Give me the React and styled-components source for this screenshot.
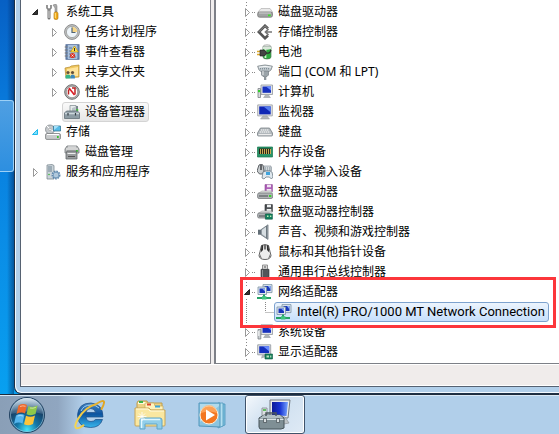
import React from 'react'
import styled, { createGlobalStyle, css } from 'styled-components'

const GlobalStyle = createGlobalStyle`
  * {
    box-sizing: border-box;
  }
  body {
    margin: 0;
    overflow: hidden;
    background: #0a96ec;
    color: #000;
    font-family: 'Noto Sans', 'Noto Sans CJK SC', sans-serif;
    font-size: 12px;
  }
  button {
    font: inherit;
    color: inherit;
  }
  svg {
    display: block;
    flex: none;
  }
`

const Screen = styled.div`
  display: flex;
  flex-direction: column;
  min-height: 100vh;
`

const Desktop = styled.main`
  display: flex;
  flex: 1;
  background: linear-gradient(#0760c4, #0878da 25%, #0a8ce6 60%, #08a0f0);
`

const DesktopEdge = styled.div`
  width: 14px;
  padding-top: 100px;
  background: linear-gradient(to right, transparent 50%, rgba(0, 30, 80, 0.5));
`

const Tile = styled.div`
  height: 72px;
  border: 1px solid #9cd0f6;
  border-left: 0;
  border-radius: 0 3px 3px 0;
  background: linear-gradient(#4f9fe2, #2d8fe0);
`

const Window = styled.section`
  display: flex;
  flex: 1;
  flex-direction: column;
  min-width: 0;
  padding: 0 0 6px 5px;
  border: solid #1c3047;
  border-width: 0 0 1px 1px;
  border-bottom-left-radius: 7px;
  background: #b1cfea;
  box-shadow: inset 1px -1px 0 #f2f8fd;
`

const Frame = styled.div`
  display: flex;
  flex: 1;
  flex-direction: column;
  border: solid #566272;
  border-width: 0 0 1px 1px;
`

const Panes = styled.div`
  display: flex;
  flex: 1;
  background: #f0eded;
`

const NavPane = styled.nav`
  width: 190px;
  padding: 2px 0 0 10px;
  border: solid #85858c;
  border-width: 0 1px 1px 0;
  background: #fff;
`

const DevicePane = styled.section`
  flex: 1;
  min-width: 0;
  margin-left: 3px;
  padding: 2px 0 0 27px;
  border: solid #7d8087;
  border-width: 0 0 1px 2px;
  background: #fff;
`

const StatusBar = styled.footer`
  height: 22px;
  border: solid #fff;
  border-width: 1px 0;
  background: #f0eceb;
`

const List = styled.ul`
  margin: 0;
  padding: 0;
  list-style: none;
`

const Row = styled.div`
  display: flex;
  align-items: center;
  height: 20px;
  padding-left: ${({ $level }) => ($level ? 19 : 0)}px;
`

const Expander = styled.button`
  width: 12px;
  height: 20px;
  padding: 0;
  border: 0;
  background: none;
`

const Blank = styled.span`
  width: 12px;
`

const selected = {
  gray: css`
    border-color: #d4d4d4;
    background: linear-gradient(#fafafa, #e6e6e6);
  `,
  blue: css`
    border-color: #7da2ce;
    background: linear-gradient(#ecf4fd, #c6dffc);
    font-family: Roboto, 'Noto Sans CJK SC', sans-serif;
    font-size: 13px;
  `,
}

const Label = styled.button`
  display: flex;
  align-items: center;
  gap: 5px;
  height: 20px;
  padding: 0 3px 0 1px;
  border: 1px solid transparent;
  border-radius: 3px;
  background: none;
  line-height: 18px;
  white-space: nowrap;
  ${({ $selected }) => selected[$selected]}
`

const Highlighted = styled.li`
  position: relative;
  &::after {
    content: '';
    position: absolute;
    inset: -5px 3px -6px -3px;
    border: 3px solid #fc363b;
    pointer-events: none;
  }
`

const Taskbar = styled.footer`
  display: flex;
  align-items: center;
  height: 40px;
  border-top: 1px solid #1f2c3c;
  background: linear-gradient(to right, #8a9fb7, #90a6c0 58px, #b1cfea 84px);
  box-shadow: inset 0 1px 0 #d9e8f5;
`

const TaskButton = styled.button`
  display: flex;
  align-items: center;
  justify-content: center;
  width: 62px;
  height: 39px;
  padding: 0;
  border: 0;
  background: none;
  ${({ $start }) =>
    $start &&
    css`
      width: 54px;
      margin-right: 3px;
    `}
  ${({ $active }) =>
    $active &&
    css`
      width: 60px;
      margin-left: 2px;
      border: 1px solid #3f536b;
      border-radius: 3px;
      background: linear-gradient(135deg, #f4f8fc, #cfe0f0 45%, #dfeaf5);
      box-shadow: inset 0 0 0 1px #fff;
    `}
`

const ICONS = {
  tools: (
    <>
      <path d="M4 6v8" stroke="#777" strokeWidth="3" strokeLinecap="round" />
      <path d="M4 6v8" stroke="#e4e4e4" />
      <path d="M2 1v3l2 2 2-2V1" fill="none" stroke="#858585" strokeWidth="1.7" />
      <path d="M8 1l3-1 1 2v6h-2V4z" fill="#aaa" stroke="#777" strokeWidth=".5" />
      <rect x="9" y="8" width="4" height="7.5" rx="1.6" fill="#f1aa19" stroke="#a96e06" strokeWidth=".6" />
      <path d="M10.3 9v5" stroke="#ffe28a" />
    </>
  ),
  clock: (
    <>
      <circle cx="8" cy="8" r="7.4" fill="#c4c4c2" stroke="#8b8d8f" />
      <circle cx="8" cy="8" r="5.6" fill="#edf4f9" stroke="#8f9494" strokeWidth=".7" />
      <path d="M8 8V2.7A5.3 5.3 0 0 1 13.3 8z" fill="#f6d587" />
      <path d="M8 3.5v5h3.5" fill="none" stroke="#506575" strokeWidth="1.2" />
    </>
  ),
  events: (
    <>
      <rect x="2" y=".8" width="13" height="14.4" fill="#7d9cc4" stroke="#4a6592" />
      <path d="M4 1h9v14H4z" fill="#a9c0dc" />
      <path d="M5 4h3M5 7h2M5 10h2M5 13h7" stroke="#5f789c" />
      <path d="M.7 3h3M.7 6h3M.7 9h3M.7 12h3" stroke="#777" />
      <path d="M10.5 2l4 6h-8z" fill="#ffe04a" stroke="#ae8404" strokeWidth=".6" />
      <path d="M10.5 4v3" stroke="#333" />
      <circle cx="8.5" cy="11.5" r="2.6" fill="#d9372a" />
      <path d="M7.5 10.5l2 2m0-2l-2 2" stroke="#fff" strokeWidth=".7" />
    </>
  ),
  shared: (
    <>
      <path d="M1 4l5-1 1-1 8-1v12l-13 1z" fill="#efc75f" stroke="#b48a2b" strokeWidth=".7" />
      <path d="M3 5l11-2v9H3z" fill="#ffe49b" />
      <circle cx="4" cy="8.5" r="1.6" fill="#665039" />
      <circle cx="8.5" cy="8.5" r="1.6" fill="#665039" />
      <path d="M1.5 14.5v-2q0-2 2.5-2t2.5 2v2z" fill="#35b58b" />
      <path d="M6.5 14.5v-2q0-2 2.2-2t2.2 2v2z" fill="#3d88bd" />
    </>
  ),
  performance: (
    <>
      <circle cx="8" cy="8" r="7.3" fill="#b4b4b4" stroke="#707070" />
      <circle cx="8" cy="8" r="5.7" fill="#fff" stroke="#777" strokeWidth=".6" />
      <path d="M4.5 10.5v-4l1.4-1.7M8 4h3v6.5" fill="none" stroke="#bd2222" strokeWidth="1.5" />
      <path d="M5 4l5.5 7" stroke="#dc1c26" strokeWidth="1.6" />
    </>
  ),
  manager: (
    <>
      <path d="M6 1.5h6v7H6z" fill="#e8ebec" stroke="#899498" strokeWidth=".8" />
      <path d="M8 8V4l3-1v5" fill="#b8c2c7" />
      <path d="M12 2h2v8h-2z" fill="#7a868d" />
      <path d="M12.4 5h1.8v2h-1.8z" fill="#3dc532" />
      <path d="M.5 9l2-2h11l2 2v5.5H.5z" fill="#8d9ca4" stroke="#626f77" strokeWidth=".8" />
      <path d="M1 9.5h14" stroke="#ccd7dc" strokeWidth="1.5" />
      <path d="M4 9v2.5M11.5 9v2.5" stroke="#343e45" strokeWidth="1.2" />
    </>
  ),
  storage: (
    <>
      <circle cx="5" cy="5.5" r="4.5" fill="#c4c8cb" stroke="#84898d" strokeWidth=".8" />
      <path d="M5 5L2 2M5 5l3 2" stroke="#fff" />
      <circle cx="5" cy="5.5" r="1.2" fill="#f7f7f7" stroke="#888" strokeWidth=".5" />
      <path d="M8.5 2h7v5h-7z" fill="#56bbe7" stroke="#367998" strokeWidth=".8" />
      <path d="M9 6l5-4H9z" fill="#a3e0f9" />
      <rect x=".6" y="9.6" width="14.8" height="5.8" rx="1.2" fill="#c9cbcc" stroke="#737678" strokeWidth=".8" />
      <path d="M2 10.5h12" stroke="#fff" />
      <path d="M12 12h1.7v2H12z" fill="#38c22d" />
    </>
  ),
  disks: (
    <>
      <path d="M1 5l2-3h10l2 3v4H1z" fill="#b9bbbc" stroke="#727678" strokeWidth=".8" />
      <path d="M2 5h12M4 3h8" stroke="#eee" />
      <path d="M12 6h1.8v2H12z" fill="#39ba31" />
      <path d="M2 10l1-3h9l1 3v5H2z" fill="#999c9e" stroke="#63676a" strokeWidth=".8" />
      <path d="M3.5 9.5h8" stroke="#eee" />
      <path d="M4 12.5h7" stroke="#555" />
    </>
  ),
  services: (
    <>
      <path d="M2 1l5-.5 2 1V15H2z" fill="#cbd4da" stroke="#7f8b93" strokeWidth=".8" />
      <path d="M3 3h4M3 5h4M3 7h4" stroke="#718592" />
      <circle cx="4" cy="10.5" r=".8" fill="#39b735" />
      <circle cx="11" cy="11" r="3.6" fill="#d5e5f2" stroke="#6189ae" strokeWidth="1.8" strokeDasharray="1.6 .8" />
      <circle cx="11" cy="11" r="2.8" fill="#bcd4e7" stroke="#658cae" strokeWidth=".8" />
      <circle cx="11" cy="11" r="1" fill="#fff" stroke="#658cae" strokeWidth=".5" />
    </>
  ),
  drive: (
    <>
      <path d="M1 8l3-3.5h9L15.5 8v1H1z" fill="#e9e9e9" stroke="#b2b2b2" strokeWidth=".7" />
      <rect x=".7" y="8" width="14.8" height="5.2" rx="1.8" fill="#a1a3a3" stroke="#777" strokeWidth=".8" />
      <path d="M2 9h12" stroke="#ddd" strokeWidth=".8" />
      <path d="M11 10.5h2.7v1.7H11z" fill="#3de529" />
    </>
  ),
  controller: (
    <>
      <path d="M11 4.5L8 1.8 1.8 8 8 14.2l3-2.7" fill="none" stroke="#555" strokeWidth="2.7" />
      <path d="M11 4.5L8 1.8 1.8 8" fill="none" stroke="#888" />
      <path d="M8 8h7M11.5 5l-3 3 3 3" fill="none" stroke="#777" strokeWidth="1.7" />
    </>
  ),
  battery: (
    <>
      <ellipse cx="10" cy="2.5" rx="4" ry="1.7" fill="#ececec" stroke="#868b86" strokeWidth=".6" />
      <path d="M6 3h8v10q0 2-4 2t-4-2z" fill="#2cab3d" stroke="#52785a" strokeWidth=".7" />
      <path d="M8.5 4v10" stroke="#caf5cd" strokeWidth="1.7" />
      <path d="M6 3h8v2q-4 1.5-8 0z" fill="#d9e6d9" />
      <path d="M0 7.5h3M0 10.5h3" stroke="#dfaa29" strokeWidth="1.3" />
      <path d="M3 6h3q3.5.3 3.5 3T6 12H3z" fill="#444" stroke="#1c1c1c" strokeWidth=".6" />
      <path d="M9 9q4 1 5-3" fill="none" stroke="#303030" strokeWidth="1.2" />
    </>
  ),
  port: (
    <>
      <path d="M.6 2.2q7.4-2.5 14.8 0L14 6l-2 1.5H4L2 6z" fill="#c0c9ce" stroke="#82898d" strokeWidth=".8" />
      <path d="M2 3.2q6-1.6 12 0" fill="none" stroke="#f7f9fa" />
      <path d="M3 4.8h10" stroke="#697780" strokeDasharray="1 1" />
      <path d="M4.5 7h7v4L10 12.5H6L4.5 11z" fill="#9ba4a9" stroke="#747d82" strokeWidth=".7" />
      <path d="M6 7v4" stroke="#eee" />
      <path d="M7 12.5h2.3V16H7z" fill="#8e969b" />
    </>
  ),
  computer: (
    <>
      <path d="M4 1h11.5v9.5H4z" fill="#e3e5e7" stroke="#92979c" strokeWidth=".8" />
      <path d="M5.5 2.5H14v6.3H5.5z" fill="#1731bf" />
      <path d="M9 2.5h5v4z" fill="#688bff" />
      <path d="M8 11h4l2 3H6z" fill="#b2b6ba" />
      <path d="M1 4.5h2.5v9H1z" fill="#d9dcdd" stroke="#7c8286" strokeWidth=".8" />
      <path d="M1 6h2.2v2.2H1z" fill="#31cf2c" />
    </>
  ),
  monitor: (
    <>
      <path d="M.7.9h14.6v11H.7z" fill="#e3e4e5" stroke="#999da1" strokeWidth=".8" />
      <path d="M2.2 2.4h11.5v8H2.2z" fill="#1027b5" />
      <path d="M6.5 2.4h7.2v5.8z" fill="#547dee" />
      <path d="M6 12h4l2.5 3h-9z" fill="#b4b7ba" stroke="#92979a" strokeWidth=".5" />
    </>
  ),
  keyboard: (
    <>
      <path d="M3.5 4h9l3 5v2q0 1-1 1h-13q-1 0-1-1V9z" fill="#b1b7bb" stroke="#7b8388" strokeWidth=".8" />
      <path d="M4 6h8M2.7 8h10.5" stroke="#fff" strokeWidth="1.2" strokeDasharray="1.4 .6" />
      <path d="M1.5 10.6h13" stroke="#ececec" strokeWidth="1.2" />
    </>
  ),
  memory: (
    <>
      <path d="M.5 3h15v10H.5z" fill="#299369" stroke="#15784e" strokeWidth=".7" />
      <path d="M2 4.5h12V10H2z" fill="#2b2717" />
      <path
        d="M3.5 5v5M5.5 5v5M7.5 5v5M9.5 5v5M11.5 5v5M13.5 5v5"
        stroke="#f1cb65"
        strokeWidth=".8"
      />
    </>
  ),
  hid: (
    <>
      <path d="M7 2h7v5H7z" fill="#d4dadd" stroke="#8a949b" strokeWidth=".7" />
      <path d="M8 4h7M8 6h7" stroke="#7d8b94" strokeDasharray="1 1" />
      <path d="M2 1q2-1.5 4 0l1 6-1.5 3h-3L0 7z" fill="#c8ccce" stroke="#51565a" strokeWidth=".9" />
      <path d="M4 1v5" stroke="#424548" strokeWidth="1.5" />
      <path d="M6 8l3-1h4l2 1 1 5-1.6 2-2-2H9l-2 2-2-1z" fill="#dfe8ee" stroke="#6d7c86" strokeWidth=".8" />
      <path d="M9 8h4v3H9z" fill="#3fa3dc" />
    </>
  ),
  floppyDrive: (
    <>
      <path d="M8 .6h7.4v7H8z" fill="#ad5fb7" stroke="#884591" strokeWidth=".6" />
      <path d="M10 .8h4v2.5h-4zM9.7 5h4.6v3H9.7z" fill="#f0e4f2" />
      <path d="M1 9.5L5 7h9l1.5 2.5" fill="#dedede" stroke="#a5a5a5" strokeWidth=".6" />
      <rect x=".6" y="9" width="15" height="5.5" rx="1.5" fill="#b0b3b5" stroke="#777b7e" strokeWidth=".8" />
      <path d="M2 12h9" stroke="#4a4f52" />
      <path d="M12 11h2.3v2H12z" fill="#3ad52b" />
    </>
  ),
  floppyController: (
    <>
      <path d="M8 .6h7.4v7H8z" fill="#4d5154" stroke="#26292b" strokeWidth=".6" />
      <path d="M10 .8h4v2.5h-4zM9.7 5h4.6v3H9.7z" fill="#edf0f1" />
      <path d="M1 9.5L5 7h9l1.5 2.5" fill="#dedede" stroke="#a5a5a5" strokeWidth=".6" />
      <rect x=".6" y="9" width="13" height="5" rx="1.5" fill="#b0b3b5" stroke="#777b7e" strokeWidth=".8" />
      <path d="M2 12h6" stroke="#4a4f52" />
      <path d="M8.4 10h7v5.2h-7z" fill="#158260" stroke="#08543d" strokeWidth=".6" />
      <path d="M10 11.5h1.5V13H10zm3 0h1.3V13H13z" fill="#bdebb1" />
    </>
  ),
  speaker: (
    <>
      <path d="M1 5.7h3.5v5H1z" fill="#626e76" />
      <path d="M4 5.7L11 .8v14.6l-7-4.7z" fill="#a7b0b6" stroke="#69747b" strokeWidth=".8" />
      <path d="M5 6l4-3v10l-4-3z" fill="#d7dee2" />
      <path d="M9.6 2v12" stroke="#67727a" />
    </>
  ),
  mouse: (
    <>
      <path d="M4.5 1.5q3.5-2 7 0l1.5 6 1 4q-.5 4-6 4t-6-4l1-4z" fill="#ececec" stroke="#555" strokeWidth=".9" />
      <path d="M4.5 1.5l-.8 7L6 6l.2-5zM11.5 1.5l.8 7L10 6l-.2-5z" fill="#303030" />
      <path d="M8 1v4.5" stroke="#555" strokeWidth="1.6" />
      <path d="M3 10l-.5 2q1 2.5 2.5 2.8zM13 10l.5 2q-1 2.5-2.5 2.8z" fill="#777" />
    </>
  ),
  usb: (
    <>
      <path d="M5.5 1h5v4.5h-5z" fill="#dadada" stroke="#888" strokeWidth=".9" />
      <path d="M7 3h2" stroke="#555" />
      <path d="M4 5.3h8v7q0 2.7-4 2.7t-4-2.7z" fill="#52565a" stroke="#303335" strokeWidth=".6" />
      <path d="M5.5 6v7" stroke="#8e9296" />
    </>
  ),
  network: (
    <>
      <path d="M6 .6h9v8H6z" fill="#dce6ee" stroke="#7890a3" strokeWidth=".8" />
      <path d="M7.5 2h6v5h-6z" fill="#1b39bc" />
      <path d="M11 2h2.5v3.5z" fill="#8db4fa" />
      <path d="M1 3h8.5v7.5H1z" fill="#e1e9ef" stroke="#7890a3" strokeWidth=".8" />
      <path d="M2.5 4.5H8V9H2.500z" fill="#1835b8" />
      <path d="M5 4.5h3v3z" fill="#83a7f2" />
      <path d="M7 10.5V13M0 14h14" stroke="#26a366" strokeWidth="2" />
      <path d="M5 12.2h4.4v3.3H5z" fill="#3fc47e" />
    </>
  ),
  system: (
    <>
      <path d="M4 .8h11.5v9.7H4z" fill="#e3e5e7" stroke="#92979c" strokeWidth=".8" />
      <path d="M5.5 2.3H14v6.5H5.5z" fill="#1731bf" />
      <path d="M9 2.3h5v4z" fill="#688bff" />
      <path d="M8 11h4l2 3H6z" fill="#aeb3b8" />
      <path d="M1 5.5h2.8V15H1z" fill="#c9ced1" stroke="#7c8286" strokeWidth=".8" />
      <path d="M1.8 7v5" stroke="#fff" />
    </>
  ),
  display: (
    <>
      <path d="M.7.8h13v10H.7z" fill="#e1e3e6" stroke="#8d949b" strokeWidth=".8" />
      <path d="M2.2 2.3h10v6.8h-10z" fill="#1530bd" />
      <path d="M6 2.3h6.2v5z" fill="#688bff" />
      <path d="M5 11h4v2l-5 1.5z" fill="#adb2b6" />
      <path d="M8 10h7.5v5H8z" fill="#16805c" stroke="#0d5942" strokeWidth=".6" />
      <path d="M9.5 11.5H12v2H9.5zm3.6 0h1.2v2h-1.2z" fill="#b9e0bc" />
    </>
  ),
}

const Icon = ({ name }) => (
  <svg width="16" height="16" viewBox="0 0 16 16" aria-hidden="true">
    {ICONS[name]}
  </svg>
)

const Arrow = ({ open, hot, dots }) => (
  <svg width="12" height="20" viewBox="0 0 12 20" aria-hidden="true">
    {dots && (
      <path d="M3 0h1v1H3zM3 3h1v1H3zM3 17h1v1H3zM9 10h1v1H9zM11 10h1v1h-1z" fill="#888" />
    )}
    {open ? (
      <path
        d="M6.5 7.5v5h-5z"
        fill={hot ? '#83dffb' : '#333'}
        stroke={hot ? '#1cb9ed' : '#222'}
        strokeLinejoin="round"
      />
    ) : (
      <path d="M2.5 6.5v8l4-4z" fill="#fff" stroke="#999" />
    )}
  </svg>
)

const Item = ({ name, icon, level, open, hot, leaf, dots, mark }) => (
  <Row $level={level}>
    {leaf ? (
      <Blank />
    ) : (
      <Expander aria-label={name} aria-expanded={!!open}>
        <Arrow open={open} hot={hot} dots={dots} />
      </Expander>
    )}
    <Label $selected={mark}>
      <Icon name={icon} />
      {name}
    </Label>
  </Row>
)

const AdapterRow = styled.div`
  display: flex;
`

const Branch = styled.svg`
  margin-right: -31px;
`

const NAV = [
  { name: '系统工具', icon: 'tools', open: true },
  { name: '任务计划程序', icon: 'clock', level: 1 },
  { name: '事件查看器', icon: 'events', level: 1 },
  { name: '共享文件夹', icon: 'shared', level: 1 },
  { name: '性能', icon: 'performance', level: 1 },
  { name: '设备管理器', icon: 'manager', level: 1, leaf: true, mark: 'gray' },
  { name: '存储', icon: 'storage', open: true, hot: true },
  { name: '磁盘管理', icon: 'disks', level: 1, leaf: true },
  { name: '服务和应用程序', icon: 'services' },
]

const DEVICES = [
  ['磁盘驱动器', 'drive'],
  ['存储控制器', 'controller'],
  ['电池', 'battery'],
  ['端口 (COM 和 LPT)', 'port'],
  ['计算机', 'computer'],
  ['监视器', 'monitor'],
  ['键盘', 'keyboard'],
  ['内存设备', 'memory'],
  ['人体学输入设备', 'hid'],
  ['软盘驱动器', 'floppyDrive'],
  ['软盘驱动器控制器', 'floppyController'],
  ['声音、视频和游戏控制器', 'speaker'],
  ['鼠标和其他指针设备', 'mouse'],
  ['通用串行总线控制器', 'usb'],
]

const MORE_DEVICES = [
  ['系统设备', 'system'],
  ['显示适配器', 'display'],
]

const DeviceItems = ({ items }) =>
  items.map(([name, icon]) => (
    <li key={name}>
      <Item name={name} icon={icon} dots />
    </li>
  ))

const StartOrb = () => (
  <svg width="38" height="38" viewBox="0 0 38 38" aria-hidden="true">
    <defs>
      <radialGradient id="orb" cx=".5" cy=".92" r=".85">
        <stop offset="0" stopColor="#42e4f8" />
        <stop offset=".35" stopColor="#1478a9" />
        <stop offset=".75" stopColor="#173f65" />
        <stop offset="1" stopColor="#6d8daa" />
      </radialGradient>
      <linearGradient id="gloss" x2="0" y2="1">
        <stop stopColor="#e6f0f7" stopOpacity=".85" />
        <stop offset="1" stopColor="#8dafca" stopOpacity=".25" />
      </linearGradient>
    </defs>
    <circle cx="19" cy="19" r="17.5" fill="url(#orb)" stroke="#244463" />
    <circle cx="19" cy="19" r="16.5" fill="none" stroke="#a4cadf" strokeOpacity=".6" />
    <path d="M3 18a16 16 0 0 1 32 0q-16-5-32 0z" fill="url(#gloss)" />
    <path d="M10.5 9.5q4.5-2.5 8.5-.5l-2 8.5q-4-2-8.5.5z" fill="#ee692b" />
    <path d="M20.5 10q4 2 9-.5l-2 8.5q-4.5 2.2-9 .2z" fill="#8fc94a" />
    <path d="M8 19.5q4.5-2.5 8.5-.5l-2 8.5q-4-2-8.5.5z" fill="#55b5ee" />
    <path d="M18 19.8q4.5 2 9-.3L25 28q-4.500 2.400-9 .3z" fill="#fbc43a" />
    <path d="M12 10.5q3-1.200 5.500-.2M22 12q3 .7 5.800-.6M9.500 20q3-1 5.500 0" fill="none" stroke="#fff" strokeOpacity=".5" />
  </svg>
)

const Explorer = () => (
  <svg width="34" height="34" viewBox="0 0 34 34" aria-hidden="true">
    <defs>
      <linearGradient id="ie" x2="0" y2="1">
        <stop stopColor="#4788c5" />
        <stop offset=".45" stopColor="#0c539f" />
        <stop offset="1" stopColor="#37b7ed" />
      </linearGradient>
      <linearGradient id="ring" x2="1" y2="0">
        <stop stopColor="#f4d553" />
        <stop offset="1" stopColor="#dfa423" />
      </linearGradient>
    </defs>
    <path
      d="M32 19H15q.5 4.5 5 4.5 3 0 4.5-2h7q-2.500 8-12 8Q7 29.500 6.500 17.500 7 5 20 5q12 1 12 14zM15 14.500h9.500q-.7-4-4.700-4t-4.800 4z"
      fill="url(#ie)"
      stroke="#1a4b84"
      strokeWidth=".7"
    />
    <path d="M10 13q2.500-6 10-6 5 0 8 3" fill="none" stroke="#a6d1ef" />
    <path
      d="M26 5.500Q32.500 1.500 33 4q.3 2-2.500 7M25.500 6Q14 9 7 21q-4.500 8-1.500 9.300 2.500.3 7-3"
      fill="none"
      stroke="url(#ring)"
      strokeWidth="2"
      strokeLinecap="round"
    />
  </svg>
)

const Folder = () => (
  <svg width="34" height="34" viewBox="0 0 34 34" aria-hidden="true">
    <path d="M4 5l1-2h9l1 2h14v22H4z" fill="#ecd184" stroke="#bf9e4d" />
    <path d="M5 4h8v2H5z" fill="#fff9dc" />
    <path d="M6 3h4v2H6z" fill="#39b34a" />
    <path d="M12 8V5h9l1 3h8v4H12z" fill="#fff3bc" stroke="#c9aa58" strokeWidth=".7" />
    <path d="M14 5.5h4v2h-4z" fill="#d9452f" />
    <path d="M22 7.5h5v2h-5z" fill="#3aa5d8" />
    <path d="M2 10h14l2 2h14v15q0 1-1 1H3q-1 0-1-1z" fill="#fae7a0" stroke="#c8a557" />
    <path d="M3 11h12l2 2h14" fill="none" stroke="#fffbe0" />
    <path d="M7 31v-9q0-2 2-2h18q2 0 2 2v9h-5v-5H12v5z" fill="#91cee9" stroke="#5fa5c8" />
    <path d="M8.5 30v-8.500H27" fill="none" stroke="#dff7ff" strokeWidth="1.5" />
    <path d="M9 14v9M4.500 18.500h9M6 15.500l6 6M12 15.500l-6 6" stroke="#fff" strokeWidth=".8" />
  </svg>
)

const Player = () => (
  <svg width="34" height="34" viewBox="0 0 34 34" aria-hidden="true">
    <path d="M25 6h5v21l-5 2z" fill="#7fc1de" stroke="#4f98bd" strokeWidth=".8" />
    <path d="M23 5h5v23l-5 2z" fill="#b2dff0" stroke="#4f98bd" strokeWidth=".8" />
    <path d="M4 5h21v24L4 28z" fill="#8bc5e0" stroke="#5196bb" />
    <path d="M5 6h19v2L5 24z" fill="#c0e2f1" fillOpacity=".7" />
    <circle cx="14" cy="17" r="9" fill="#f37721" stroke="#fff0da" />
    <path d="M6 15a8 8 0 0 1 16 0q-8-3-16 0z" fill="#ffb26c" fillOpacity=".7" />
    <path d="M11 11.500v11l9-5.500z" fill="#fff" />
  </svg>
)

const Toolbox = () => (
  <svg width="36" height="36" viewBox="0 0 36 36" aria-hidden="true">
    <defs>
      <linearGradient id="screen" x2="1" y2="0">
        <stop stopColor="#0b1997" />
        <stop offset=".5" stopColor="#1732d2" />
        <stop offset="1" stopColor="#77a5ff" />
      </linearGradient>
    </defs>
    <path d="M13 3h20l-2 18-18-1z" fill="#e7eaec" stroke="#757b80" />
    <path d="M15 5h16l-1.500 14L15 18z" fill="url(#screen)" />
    <path d="M21 20h7l4 6-10 2z" fill="#bfc4c7" stroke="#8c9499" strokeWidth=".7" />
    <path d="M5 11h5v9H5z" fill="#dde0e2" stroke="#7f878b" strokeWidth=".8" />
    <path d="M6 13h3" stroke="#38b437" strokeWidth="1.5" />
    <path d="M2 21l5-3h16l4 3v10l-3 1H3l-1-2z" fill="#7f8f95" stroke="#465359" />
    <path d="M2.500 21.500L7 18h16l3.500 3.500z" fill="#b2bfc4" />
    <path d="M2.500 22.500h24" stroke="#dbe3e6" />
    <path d="M9 19v-3h10v3" fill="none" stroke="#4c575c" strokeWidth="1.5" />
    <path d="M6.500 21.500h3v4h-3zM19.500 21.500h3v4h-3z" fill="#d6dcde" stroke="#424b50" strokeWidth=".7" />
  </svg>
)

const App = () => (
  <>
    <GlobalStyle />
    <Screen>
      <Desktop>
        <DesktopEdge>
          <Tile />
        </DesktopEdge>
        <Window>
          <Frame>
            <Panes>
              <NavPane>
                <List>
                  {NAV.map(item => (
                    <li key={item.name}>
                      <Item {...item} />
                    </li>
                  ))}
                </List>
              </NavPane>
              <DevicePane>
                <List>
                  <DeviceItems items={DEVICES} />
                  <Highlighted>
                    <Item name="网络适配器" icon="network" open dots />
                    <AdapterRow>
                      <Branch width="31" height="20" viewBox="0 0 31 20" aria-hidden="true">
                        <path
                          d="M3.500 0v20M22.500 0v10M22.500 10.500h9"
                          fill="none"
                          stroke="#888"
                          strokeDasharray="1 1"
                        />
                      </Branch>
                      <Item
                        name="Intel(R) PRO/1000 MT Network Connection"
                        icon="network"
                        level={1}
                        leaf
                        mark="blue"
                      />
                    </AdapterRow>
                  </Highlighted>
                  <DeviceItems items={MORE_DEVICES} />
                </List>
              </DevicePane>
            </Panes>
            <StatusBar />
          </Frame>
        </Window>
      </Desktop>
      <Taskbar>
        <TaskButton $start aria-label="开始">
          <StartOrb />
        </TaskButton>
        <TaskButton aria-label="Internet Explorer">
          <Explorer />
        </TaskButton>
        <TaskButton aria-label="资源管理器">
          <Folder />
        </TaskButton>
        <TaskButton aria-label="Media Player">
          <Player />
        </TaskButton>
        <TaskButton $active aria-label="计算机管理">
          <Toolbox />
        </TaskButton>
      </Taskbar>
    </Screen>
  </>
)

export default App
